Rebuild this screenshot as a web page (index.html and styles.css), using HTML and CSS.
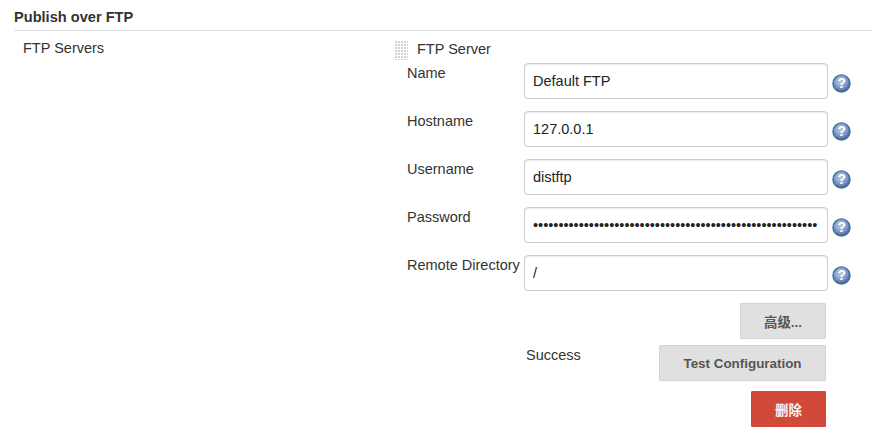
FILE: index.html
```html
<!DOCTYPE html>
<html lang="en">
<head>
<meta charset="utf-8">
<title>Publish over FTP</title>
<link rel="stylesheet" href="styles.css">
</head>
<body>
<h2 class="section-title">Publish over FTP</h2>
<div class="section">
  <div class="section-label">FTP Servers</div>
  <div class="server">
    <div class="server-head">
      <span class="handle"></span>
      <span class="server-title">FTP Server</span>
    </div>
    <div class="field">
      <label class="field-label">Name</label>
      <input class="field-input" type="text" value="Default FTP">
      <svg class="help" viewBox="0 0 20 20"><defs><radialGradient id="h1" cx="45%" cy="38%" r="62%"><stop offset="0" stop-color="#b7cde8"/><stop offset=".6" stop-color="#7f9fcb"/><stop offset="1" stop-color="#2f5a98"/></radialGradient></defs><circle cx="10" cy="10" r="9" fill="url(#h1)" stroke="#47689c" stroke-width="1.4"/><text x="10" y="15" text-anchor="middle" class="help-mark">?</text></svg>
    </div>
    <div class="field">
      <label class="field-label">Hostname</label>
      <input class="field-input" type="text" value="127.0.0.1">
      <svg class="help" viewBox="0 0 20 20"><circle cx="10" cy="10" r="9" fill="url(#h1)" stroke="#47689c" stroke-width="1.4"/><text x="10" y="15" text-anchor="middle" class="help-mark">?</text></svg>
    </div>
    <div class="field">
      <label class="field-label">Username</label>
      <input class="field-input" type="text" value="distftp">
      <svg class="help" viewBox="0 0 20 20"><circle cx="10" cy="10" r="9" fill="url(#h1)" stroke="#47689c" stroke-width="1.4"/><text x="10" y="15" text-anchor="middle" class="help-mark">?</text></svg>
    </div>
    <div class="field">
      <label class="field-label">Password</label>
      <input class="field-input" type="password" value="xxxxxxxxxxxxxxxxxxxxxxxxxxxxxxxxxxxxxxxxxxxxxxxxxxxxxxxx">
      <svg class="help" viewBox="0 0 20 20"><circle cx="10" cy="10" r="9" fill="url(#h1)" stroke="#47689c" stroke-width="1.4"/><text x="10" y="15" text-anchor="middle" class="help-mark">?</text></svg>
    </div>
    <div class="field">
      <label class="field-label">Remote Directory</label>
      <input class="field-input" type="text" value="/">
      <svg class="help" viewBox="0 0 20 20"><circle cx="10" cy="10" r="9" fill="url(#h1)" stroke="#47689c" stroke-width="1.4"/><text x="10" y="15" text-anchor="middle" class="help-mark">?</text></svg>
    </div>
    <div class="actions">
      <button class="btn btn-advanced">高级...</button>
      <div class="test-row">
        <span class="status">Success</span>
        <button class="btn btn-test">Test Configuration</button>
      </div>
      <button class="btn btn-delete">删除</button>
    </div>
  </div>
</div>
</body>
</html>
```
FILE: styles.css
```css
html, body {
  margin: 0;
  padding: 0;
  background: #fff;
  width: 872px;
  height: 434px;
  overflow: hidden;
  font-family: "Liberation Sans", Arial, "Noto Sans CJK SC", sans-serif;
  font-size: 14.5px;
  color: #333;
}
.section-title {
  margin: 0 0 0 14px;
  height: 30px;
  border-bottom: 1px solid #ddd;
  font-size: 14.6px;
  line-height: 34px;
  font-weight: bold;
  color: #333;
}
.section {
  display: flex;
  padding-top: 9px;
}
.section-label {
  width: 395px;
  padding-left: 23px;
  box-sizing: border-box;
  line-height: 16px;
  color: #333;
}
.server {
  display: flex;
  flex-direction: column;
  width: 477px;
}
.server-head {
  display: flex;
  align-items: flex-start;
  height: 23px;
  gap: 9px;
}
.handle {
  width: 13px;
  height: 19px;
  margin-top: 1px;
  background-image: linear-gradient(135deg, #d4d4d4 0 100%);
  background-size: 2px 2px;
  background-repeat: repeat;
  -webkit-mask-image:
    linear-gradient(to right, #000 2px, transparent 2px),
    linear-gradient(to bottom, #000 2px, transparent 2px);
  -webkit-mask-size: 3px 3px;
  -webkit-mask-composite: source-in;
  mask-composite: intersect;
  background-size: auto;
}
.server-title {
  line-height: 19px;
}
.field {
  display: flex;
  align-items: flex-start;
  height: 48px;
  padding-left: 12px;
}
.field-label {
  width: 117px;
  flex: none;
  line-height: 16px;
  padding-top: 2px;
  white-space: nowrap;
}
.field-input {
  width: 304px;
  height: 36px;
  box-sizing: border-box;
  flex: none;
  margin: 0;
  padding: 0 8px;
  border: 1px solid #ccc;
  border-radius: 4px;
  font-family: inherit;
  font-size: 14.5px;
  color: #222;
  background: #fff;
  box-shadow: inset 0 1px 1px rgba(0,0,0,.075);
}
.help {
  width: 19px;
  height: 19px;
  flex: none;
  margin: 11px 0 0 4px;
}
.help-mark {
  font-family: "Liberation Sans", sans-serif;
  font-size: 15px;
  font-weight: bold;
  fill: #fff;
}
.actions {
  display: flex;
  flex-direction: column;
  align-items: flex-end;
  width: 431px;
}
.btn {
  height: 36px;
  box-sizing: border-box;
  margin: 0;
  padding: 0;
  border: 1px solid #d4d4d4;
  border-radius: 1px;
  background: #e0e0e0;
  color: #555;
  font-family: inherit;
  font-size: 13.4px;
  font-weight: bold;
}
.btn-advanced {
  width: 86px;
}
.test-row {
  display: flex;
  align-items: flex-start;
  justify-content: space-between;
  width: 300px;
  margin-top: 6px;
}
.status {
  padding-top: 2px;
  line-height: 16px;
}
.btn-test {
  width: 167px;
}
.btn-delete {
  width: 75px;
  margin-top: 10px;
  background: #d24939;
  border-color: #d24939;
  color: #f5f5f5;
}
```
